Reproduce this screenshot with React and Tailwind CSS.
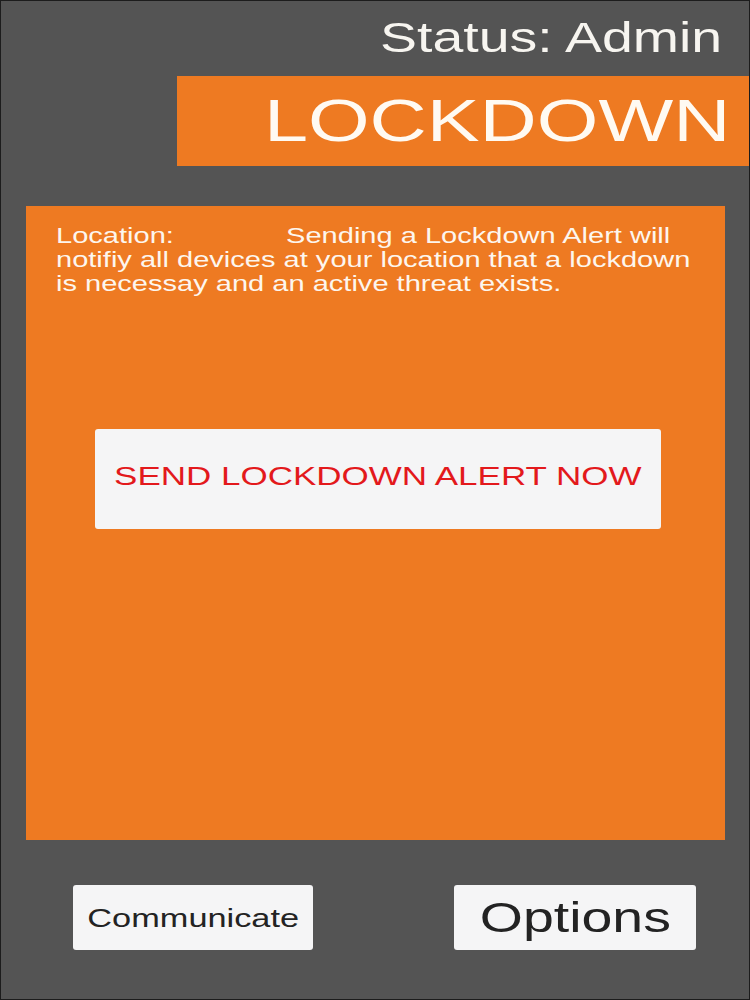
// App.jsx
import React from 'react'

const font = { fontFamily: '"Liberation Sans", Arial, sans-serif' }

// The source art is stretched sideways, so text spans get a horizontal scale.
function Wide({ origin = 'origin-left', className = '', children }) {
  return (
    <span className={`inline-block scale-x-[1.32] ${origin} ${className}`}>
      {children}
    </span>
  )
}

export default function App() {
  return (
    <div
      style={font}
      className="w-[750px] h-[1000px] bg-[#545454] border border-[#1c1c1c] flex flex-col overflow-hidden"
    >
      {/* Status */}
      <div className="h-[75px] pt-[16px] pr-[27px] text-right">
        <Wide origin="origin-right" className="text-[42px] leading-none text-[#f7f5f0]">
          Status: Admin
        </Wide>
      </div>

      {/* Lockdown banner */}
      <div className="ml-[176px] -mr-px h-[90px] bg-[#ee7a22] flex items-center justify-end pr-[20px]">
        <Wide origin="origin-right" className="text-[60px] leading-none text-[#fffaf2]">
          LOCKDOWN
        </Wide>
      </div>

      {/* Alert panel */}
      <div className="mt-[40px] ml-[25px] mr-[24px] h-[634px] bg-[#ee7a22] flex flex-col pt-[18px] pl-[30px]">
        <Wide className="text-[22px] leading-[24px] text-[#fdf6ee] whitespace-nowrap">
          Location:<span className="inline-block w-[85px]" />Sending a Lockdown Alert will
          <br />
          notifiy all devices at your location that a lockdown
          <br />
          is necessay and an active threat exists.
        </Wide>

        <button className="mt-[133px] ml-[39px] w-[566px] h-[100px] rounded-[3px] bg-[#f5f5f6] pt-[34px] flex justify-center items-start">
          <Wide origin="origin-center" className="text-[26.5px] leading-none text-[#e3191c]">
            SEND LOCKDOWN ALERT NOW
          </Wide>
        </button>
      </div>

      {/* Bottom actions */}
      <div className="mt-[45px] flex justify-between pl-[72px] pr-[53px]">
        <button className="w-[240px] h-[65px] rounded-[3px] bg-[#f5f5f6] flex items-center justify-center">
          <Wide origin="origin-center" className="text-[26px] leading-none text-[#232323]">
            Communicate
          </Wide>
        </button>
        <button className="w-[242px] h-[65px] rounded-[3px] bg-[#f5f5f6] flex items-center justify-center">
          <Wide origin="origin-center" className="text-[42px] leading-none text-[#232323]">
            Options
          </Wide>
        </button>
      </div>
    </div>
  )
}
